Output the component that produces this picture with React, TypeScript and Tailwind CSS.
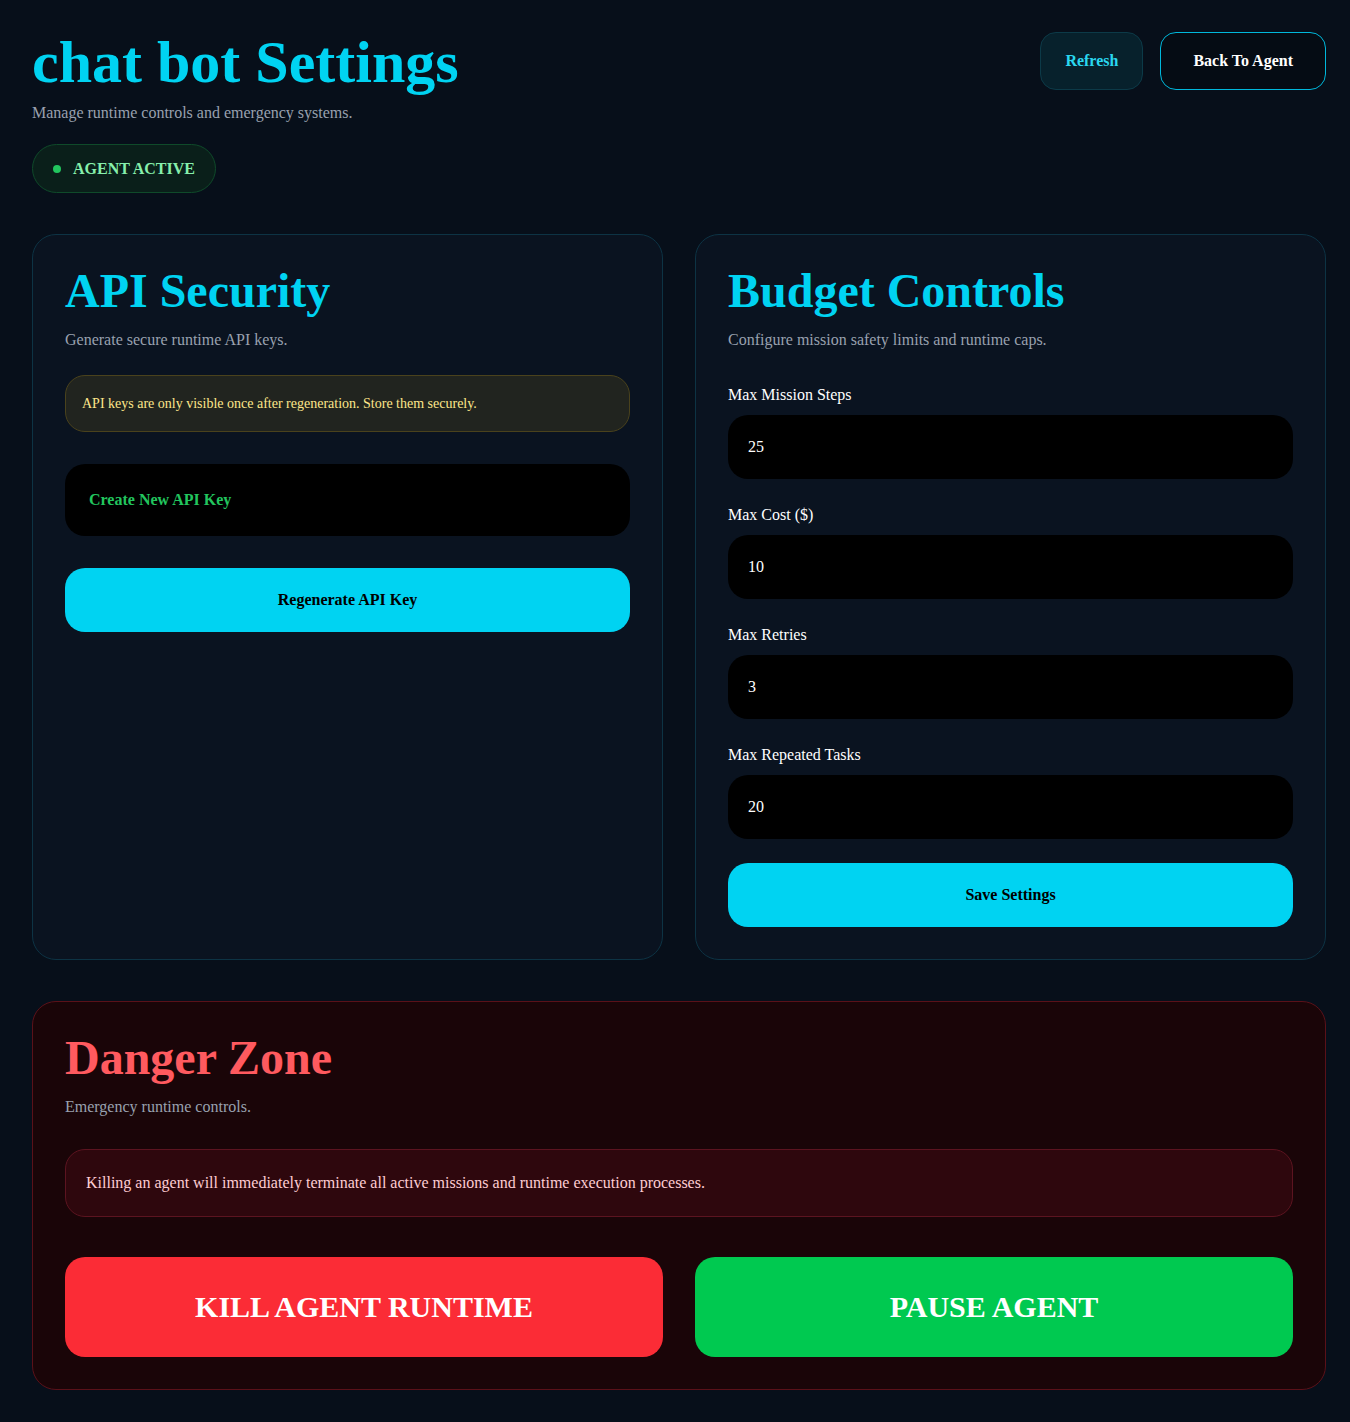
import React from 'react';

const fields = [
  { label: 'Max Mission Steps', value: '25' },
  { label: 'Max Cost ($)', value: '10' },
  { label: 'Max Retries', value: '3' },
  { label: 'Max Repeated Tasks', value: '20' },
];

export default function App() {
  return (
    <div className="min-h-[1422px] bg-[#070f1a] py-8 pl-8 pr-6 font-['Liberation_Serif',serif] text-white">
      <div className="flex items-start justify-between">
        <div>
          <h1 className="text-6xl font-bold leading-none text-[#00d3f2]">chat bot Settings</h1>
          <p className="mt-[9px] text-base text-gray-400">Manage runtime controls and emergency systems.</p>
          <div className="mt-[19px] inline-flex h-[49px] items-center gap-3 rounded-full border border-[#0f4a2a] bg-[#0a1f1a] px-5">
            <span className="h-2 w-2 rounded-full bg-[#22c55e]" />
            <span className="text-base font-bold text-[#86efac]">AGENT ACTIVE</span>
          </div>
        </div>
        <div className="flex gap-[17px]">
          <button className="h-[58px] rounded-2xl border border-[#0c3a48] bg-[#07212c] px-6 text-base font-bold text-[#2ad8f0]">
            Refresh
          </button>
          <button className="h-[58px] rounded-2xl border border-[#00b8db] bg-[#050c14] px-8 text-base font-bold text-white">
            Back To Agent
          </button>
        </div>
      </div>

      <div className="mt-[41px] grid grid-cols-2 gap-8">
        <section className="rounded-3xl border border-[#0d3344] bg-[#0a1320] p-8">
          <h2 className="text-5xl font-bold leading-none text-[#00d3f2]">API Security</h2>
          <p className="mt-[13px] text-base text-gray-400">Generate secure runtime API keys.</p>
          <div className="mt-[23px] flex h-[57px] items-center rounded-[20px] border border-[#4a421c] bg-[#21241f] px-4 text-sm text-[#fde68a]">
            API keys are only visible once after regeneration. Store them securely.
          </div>
          <div className="mt-8 flex h-[72px] items-center rounded-[20px] bg-black px-6 text-base font-bold text-[#22c55e]">
            Create New API Key
          </div>
          <button className="mt-8 h-[64px] w-full rounded-[20px] bg-[#00d3f2] text-base font-bold text-black">
            Regenerate API Key
          </button>
        </section>

        <section className="rounded-3xl border border-[#0d3344] bg-[#0a1320] p-8">
          <h2 className="text-5xl font-bold leading-none text-[#00d3f2]">Budget Controls</h2>
          <p className="mt-[13px] text-base text-gray-400">Configure mission safety limits and runtime caps.</p>
          <div className="mt-[31px] flex flex-col gap-6">
            {fields.map((f) => (
              <div key={f.label}>
                <div className="mb-2 text-base text-white">{f.label}</div>
                <div className="flex h-[64px] items-center rounded-[20px] bg-black px-5 text-base text-white">
                  {f.value}
                </div>
              </div>
            ))}
          </div>
          <button className="mt-6 h-[64px] w-full rounded-[20px] bg-[#00d3f2] text-base font-bold text-black">
            Save Settings
          </button>
        </section>
      </div>

      <section className="mt-[41px] rounded-3xl border border-[#5a1119] bg-[#1a0508] p-8">
        <h2 className="text-5xl font-bold leading-none text-[#ff5a5f]">Danger Zone</h2>
        <p className="mt-[13px] text-base text-gray-400">Emergency runtime controls.</p>
        <div className="mt-[30px] flex h-[68px] items-center rounded-[20px] border border-[#5c1420] bg-[#2e070d] px-5 text-base text-[#fecdd3]">
          Killing an agent will immediately terminate all active missions and runtime execution processes.
        </div>
        <div className="mt-[40px] grid grid-cols-2 gap-8">
          <button className="h-[100px] rounded-[20px] bg-[#fb2c36] text-3xl font-bold text-white">
            KILL AGENT RUNTIME
          </button>
          <button className="h-[100px] rounded-[20px] bg-[#00c950] text-3xl font-bold text-white">
            PAUSE AGENT
          </button>
        </div>
      </section>
    </div>
  );
}
